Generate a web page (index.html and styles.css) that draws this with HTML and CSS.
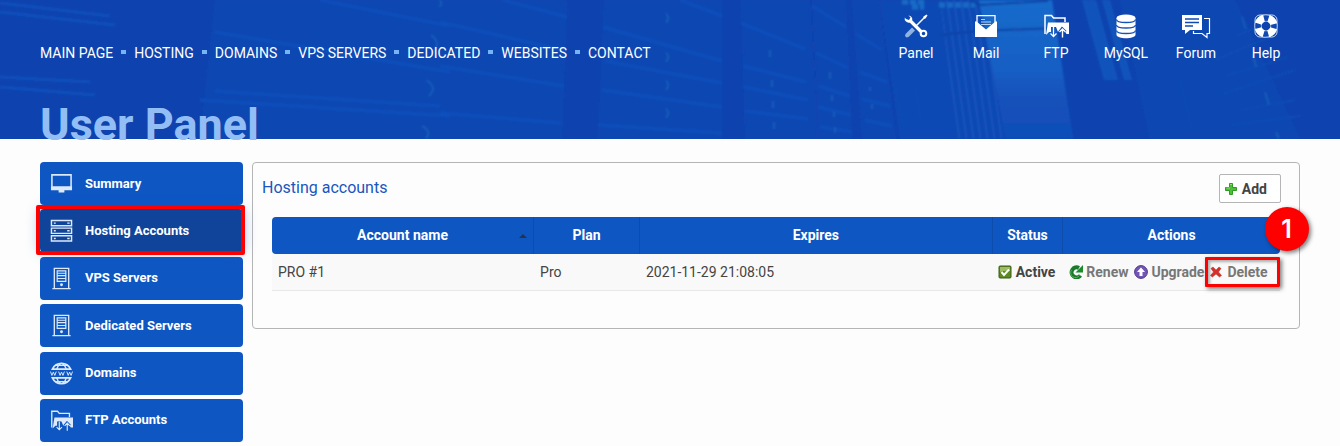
FILE: index.html
```html
<!DOCTYPE html>
<html lang="en">
<head>
    <meta charset="UTF-8">
    <title>User Panel - Hosting accounts</title>
    <link rel="stylesheet" href="styles.css">
</head>
<body>
    <!-- Shared icons -->
    <svg class="sprite" aria-hidden="true">
        <symbol id="icon-ftp" viewBox="0 0 26 24">
            <path d="M2 20V1.500h6.500l2 2.500H22v4" fill="none" stroke="currentColor" stroke-width="1.500"/>
            <path d="M5 8.500H26V20h-2.500L19 12.500l-4 5.500-2-5H8v5H6l-3 3z" fill="currentColor"/>
            <path d="M10.500 13v9M7.500 19.500l3 3 3-3M19.500 23.500v-8M16.500 18l3-3 3 3" fill="none" stroke="#0e55c0" stroke-width="3"/>
            <path d="M10.500 13v9M7.500 19.500l3 3 3-3M19.500 23.500v-8M16.500 18l3-3 3 3" fill="none" stroke="currentColor" stroke-width="1.300"/>
        </symbol>
        <symbol id="icon-server" viewBox="0 0 24 24">
            <path d="M4.500 22V1.500h15V22M2.500 22.500h19" fill="none" stroke="currentColor" stroke-width="1.400"/>
            <path d="M7.500 4h9v11h-9zM7.500 6.500h9M7.500 9h9M7.500 12h9" fill="none" stroke="currentColor" stroke-width="1.200"/>
            <circle cx="12" cy="18.500" r="1.500" fill="currentColor"/>
        </symbol>
    </svg>

    <header class="header">
        <svg class="header-art" viewBox="0 0 1340 139" preserveAspectRatio="xMidYMid slice" aria-hidden="true">
            <defs>
                <linearGradient id="glass" x1="0" y1="0" x2="0" y2="1">
                    <stop offset="0" stop-color="#176bcb"/>
                    <stop offset="0.500" stop-color="#145fc4"/>
                    <stop offset="0.700" stop-color="#1351ba"/>
                    <stop offset="1" stop-color="#1150b9"/>
                </linearGradient>
                <pattern id="slats" width="7" height="8" patternUnits="userSpaceOnUse" patternTransform="skewX(8)">
                    <path d="M2 0v8" stroke="#1659bf" stroke-width="2"/>
                </pattern>
                <filter id="soft"><feGaussianBlur stdDeviation="0.800"/></filter>
            </defs>
            <rect width="1340" height="139" fill="#0e43af"/>
            <g filter="url(#soft)">
                <!-- rack faces -->
                <path d="M215 0H567L562 139H200zM604 0H722V139H598zM741 0H810L818 139H745zM812 0H846L852 139H819zM852 0H879L896 139H862z" fill="#1047b2"/>
                <path d="M880 0H1000L1070 139H900z" fill="#1049b4"/>
                <path d="M940 0H979L1006 139H957z" fill="url(#slats)" opacity="0.600"/>
                <path d="M979 0H1052L1073 139H1006z" fill="url(#glass)"/>
                <path d="M1082 0h14l22 80h-14zM1102 0h8l22 80h-8z" fill="#155bc0" opacity="0.700"/>
                <path d="M1120 0H1235L1300 139H1150z" fill="#1147b2"/>
                <!-- shelf edges -->
                <g fill="none" stroke="#1150bc" stroke-width="3">
                    <path d="M0 3L110 16M0 12L115 25M0 77L90 82M0 87L95 95"/>
                    <path d="M320 0L450 26M215 32L450 72M200 100L450 116M215 91L440 106"/>
                    <path d="M503 0L567 17M440 22L566 51M440 66L564 86M440 113L561 123"/>
                    <path d="M603 27L722 61M605 61L722 83M602 90L722 107M598 125L722 133M680 0L722 16"/>
                    <path d="M741 23L805 49M743 66L806 82M744 87L808 100M745 111L808 119M812 6L846 27M816 53L848 68M818 86L850 96M818 107L851 115M820 127L852 132"/>
                    <path d="M856 34L882 50M860 72L887 82M862 99L890 106M865 120L892 126"/>
                </g>
                <!-- side rack handles -->
                <g fill="none" stroke="#155cb9" stroke-width="2">
                    <path d="M439 0q5 3 0 7M431 35q11 7 1 19M426 80q12 7 3 16M422 126q10 5 4 13"/>
                    <path d="M666 13q4 5 0 10M666 52q4 5 0 10M666 80q4 5 0 10M666 108q4 5 0 10M770 50v7M772 80v7M773 101v7M774 122v7M830 72v7M832 95v6M834 112v5M835 127v6M870 87v4M872 104v5M1242 17l4 12M1253 55l3 12M1265 92l4 13M1276 132l3 7"/>
                </g>
                <!-- ceiling lamps -->
                <path d="M902 2h24M912 7h12M939 5h36" fill="none" stroke="#176cc6" stroke-width="5" stroke-dasharray="6 2"/>
                <path d="M970 0L980 5 1048 1M940 35L978 31 1057 28" fill="none" stroke="#1043a5" stroke-width="2"/>
                <!-- cable bundles -->
                <g stroke="#1453b9" stroke-width="1">
                    <path d="M1222 94L1295 70M1226 76L1288 57M1215 60L1272 36M1240 110L1295 100M1232 125L1300 116M1236 36L1258 27"/>
                    <path d="M895 85l8 40M915 83l6 40M1180 80l12 50" opacity="0.600"/>
                </g>
            </g>
        </svg>

        <div class="header-bar">
            <nav class="main-nav">
                <a href="#">MAIN PAGE</a>
                <a href="#">HOSTING</a>
                <a href="#">DOMAINS</a>
                <a href="#">VPS SERVERS</a>
                <a href="#">DEDICATED</a>
                <a href="#">WEBSITES</a>
                <a href="#">CONTACT</a>
            </nav>
            <nav class="quick-nav">
                <a href="#">
                    <svg viewBox="0 0 26 26">
                        <path d="M9 14.500L2.500 21l-.500 2 1.500 1.500 2-.500L12 17.500z" fill="#8fb2e2"/>
                        <path d="M12 14l9-9" stroke="#fff" stroke-width="1.400"/>
                        <path d="M20 5.500l.500-2 3-2 1 1-2 3-2 .500z" fill="#fff"/>
                        <path d="M7 7.500L19 19.500" stroke="#fff" stroke-width="3.200"/>
                        <path d="M5.500 2.500l2 2L6 7 3 6 1.800 4.500a4.200 4.200 0 0 0 4.600 5.200l2.800-2.300A4 4 0 0 0 5.500 2.500z" fill="#fff"/>
                        <circle cx="20.500" cy="20.500" r="2.800" fill="none" stroke="#fff" stroke-width="2"/>
                    </svg>
                    Panel
                </a>
                <a href="#">
                    <svg viewBox="0 0 26 26">
                        <path d="M4 11V2.700h18V11" fill="none" stroke="#fff" stroke-width="1.300"/>
                        <path d="M8 6.500h4M8 9h10M8 11.500h10" stroke="#b9d4f3" stroke-width="1.200"/>
                        <path d="M2 9l1-1 10 8.500L23 8l1 1v15H2z" fill="#fff"/>
                    </svg>
                    Mail
                </a>
                <a href="#">
                    <svg viewBox="0 0 26 24"><use href="#icon-ftp"/></svg>
                    FTP
                </a>
                <a href="#">
                    <svg viewBox="0 0 26 26">
                        <path d="M3.500 5v16.500c0 5 19 5 19 0V5z" fill="#fff"/>
                        <ellipse cx="13" cy="5" rx="9.500" ry="3.400" fill="#fff"/>
                        <path d="M3.500 6.500c0 4 19 4 19 0M3.500 12c0 4 19 4 19 0M3.500 17.500c0 4 19 4 19 0" fill="none" stroke="#1453b9" stroke-width="1.300"/>
                    </svg>
                    MySQL
                </a>
                <a href="#">
                    <svg class="icon-wide" viewBox="0 0 30 26">
                        <path d="M23 5.500h5.500v15H26v4l-5-4h-8.500V18" fill="none" stroke="#fff" stroke-width="1.200"/>
                        <path d="M1 2h20v15H9l-5 4v-4H1z" fill="#fff"/>
                        <path d="M4 6h14M4 9.500h14M4 13h8" stroke="#1048b2" stroke-width="1.400"/>
                    </svg>
                    Forum
                </a>
                <a href="#">
                    <svg viewBox="0 0 26 26">
                        <rect x="2" y="2" width="22" height="22" rx="5" fill="none" stroke="#c3d6f1" stroke-width="1"/>
                        <circle cx="13" cy="13" r="8" fill="none" stroke="#c3d6f1" stroke-width="7"/>
                        <circle cx="13" cy="13" r="8" fill="none" stroke="#1048b2" stroke-width="5.600"/>
                        <circle cx="13" cy="13" r="8" fill="none" stroke="#fff" stroke-width="7" stroke-dasharray="8 4.566" transform="rotate(16.400 13 13)"/>
                    </svg>
                    Help
                </a>
            </nav>
        </div>
        <h1>User Panel</h1>
    </header>

    <main class="content">
        <nav class="sidebar">
            <a href="#">
                <svg viewBox="0 0 24 24">
                    <path d="M2 3h20v13H2z" fill="none" stroke="currentColor" stroke-width="1.600"/>
                    <path d="M1 15h22v4H1zM9 19h6v2.500H9z" fill="currentColor"/>
                </svg>
                Summary
            </a>
            <a href="#" class="selected">
                <svg viewBox="0 0 24 24">
                    <path d="M1.500 1.500h21v5.500h-21zM1.500 9.500h21V15h-21zM1.500 17.500h21V23h-21z" fill="none" stroke="currentColor" stroke-width="1.500"/>
                    <path d="M4 4.300h2M4 12.300h2M4 20.300h2M18 4.300h2.500M18 12.300h2.500M18 20.300h2.500" stroke="currentColor" stroke-width="1.500"/>
                </svg>
                Hosting Accounts
            </a>
            <a href="#">
                <svg viewBox="0 0 24 24"><use href="#icon-server"/></svg>
                VPS Servers
            </a>
            <a href="#">
                <svg viewBox="0 0 24 24"><use href="#icon-server"/></svg>
                Dedicated Servers
            </a>
            <a href="#">
                <svg viewBox="0 0 24 24">
                    <path d="M2.500 7.500a10.500 10.500 0 0 1 19 0zM2.500 16.500a10.500 10.500 0 0 0 19 0z" fill="none" stroke="currentColor" stroke-width="1.800"/>
                    <path d="M7 7.500q1-4 4-6M17 7.500q-1-4-4-6M7 16.500q1 4 4 6M17 16.500q-1 4-4 6M6 3.500h12M6 20.500h12" fill="none" stroke="currentColor" stroke-width="1.500"/>
                    <path d="M.500 10l1.500 4 1.500-3.500L5 14l1.500-4M9 10l1.500 4 1.500-3.500 1.500 3.500 1.500-4M17.500 10l1.500 4 1.500-3.500 1.500 3.500 1.500-4" fill="none" stroke="currentColor" stroke-width="1"/>
                </svg>
                Domains
            </a>
            <a href="#">
                <svg viewBox="0 0 26 24"><use href="#icon-ftp"/></svg>
                FTP Accounts
            </a>
        </nav>

        <section class="panel">
            <div class="panel-head">
                <h2>Hosting accounts</h2>
                <button type="button" class="add-button">
                    <svg viewBox="0 0 14 14">
                        <path d="M5.500 1.500h3v4h4v3h-4v4h-3v-4h-4v-3h4z" fill="#4fbd3a" stroke="#2f9a22" stroke-width="1" stroke-linejoin="round"/>
                        <path d="M6 2.500h2M2.500 6H6" stroke="#8fe07a" stroke-width="1"/>
                    </svg>
                    Add
                </button>
            </div>

            <table class="accounts">
                <colgroup>
                    <col class="col-name">
                    <col class="col-plan">
                    <col class="col-expires">
                    <col class="col-status">
                    <col class="col-actions">
                </colgroup>
                <thead>
                    <tr>
                        <th class="sorted">Account name</th>
                        <th>Plan</th>
                        <th>Expires</th>
                        <th>Status</th>
                        <th>Actions</th>
                    </tr>
                </thead>
                <tbody>
                    <tr>
                        <td>PRO #1</td>
                        <td>Pro</td>
                        <td>2021-11-29 21:08:05</td>
                        <td>
                            <span class="status">
                                <svg viewBox="0 0 14 14">
                                    <rect x="1" y="1" width="12" height="12" rx="1" fill="#5d8a22" stroke="#3c5c16"/>
                                    <path d="M2 2h10v4q-5-1-10 1z" fill="#9cbb62"/>
                                    <path d="M3.500 7l2.500 3L11 4.500" fill="none" stroke="#fff" stroke-width="2"/>
                                </svg>
                                Active
                            </span>
                        </td>
                        <td>
                            <div class="actions">
                                <a href="#">
                                    <svg viewBox="0 0 14 14">
                                        <path d="M11.500 10.500A5 5 0 1 1 10 3" fill="none" stroke="#1c7a2c" stroke-width="4"/>
                                        <path d="M14 0v7.500H6.500z" fill="#1a8a2e"/>
                                        <path d="M10.500 10.500A4.500 4.500 0 0 1 2.500 5" fill="none" stroke="#4fb45a" stroke-width="1"/>
                                    </svg>
                                    Renew
                                </a>
                                <a href="#">
                                    <svg viewBox="0 0 14 14">
                                        <circle cx="7" cy="7" r="6.400" fill="#7355b3" stroke="#50378f"/>
                                        <path d="M7 2.500L3 7h2.500v4h3V7H11z" fill="#fff"/>
                                    </svg>
                                    Upgrade
                                </a>
                                <a href="#" class="delete">
                                    <svg viewBox="0 0 14 14">
                                        <path d="M1 3.500L3 2l3 3 3-3 2 1.500L8.500 7l3 3.500L9.500 12 6 9l-3.500 3-2-1.500L3.500 7z" fill="#d5312c" stroke="#b82a27" stroke-width="0.500" stroke-linejoin="round"/>
                                    </svg>
                                    Delete
                                    <span class="step">1</span>
                                </a>
                            </div>
                        </td>
                    </tr>
                </tbody>
            </table>
        </section>
    </main>
</body>
</html>
```
FILE: styles.css
```css
body {
    margin: 0;
    font-family: Roboto, "Liberation Sans", sans-serif;
    font-size: 14px;
    line-height: 20px;
    color: #444;
    background-color: #fdfdfd;
}

a {
    color: inherit;
    text-decoration: none;
}

svg {
    flex: none;
}

.sprite {
    display: none;
}

/* Header */
.header {
    position: relative;
    padding: 13px 39px 0 40px;
    color: white;
    background-color: #0e43af;
}

.header-art {
    position: absolute;
    top: 0;
    left: 0;
    width: 100%;
    height: 100%;
}

.header-bar {
    position: relative;
    display: flex;
    justify-content: space-between;
    align-items: flex-end;
}

.main-nav {
    display: flex;
}

.main-nav a + a::before {
    content: "";
    display: inline-block;
    width: 5px;
    height: 4px;
    margin: 0 8px;
    vertical-align: 4px;
    background-color: #76b5f5;
}

.quick-nav {
    display: flex;
}

.quick-nav a {
    display: flex;
    flex-direction: column;
    align-items: center;
    gap: 4px;
    width: 70px;
}

.quick-nav svg {
    width: 26px;
    height: 26px;
}

.quick-nav .icon-wide {
    width: 30px;
}

/* The title stands on the lower edge of the header */
.header h1 {
    position: relative;
    margin: 39px 0 0;
    font-size: 45px;
    line-height: 45px;
    height: 37px;
    color: #92bdf5;
}

/* Page body */
.content {
    display: flex;
    align-items: flex-start;
    gap: 9px;
    padding: 23px 40px 0;
}

.sidebar {
    display: flex;
    flex-direction: column;
    justify-content: space-between;
    flex: none;
    width: 203px;
    min-height: 280px;
}

.sidebar a {
    position: relative;
    display: flex;
    align-items: center;
    gap: 12px;
    height: 43px;
    padding: 0 10px;
    box-sizing: border-box;
    border-radius: 4px;
    font-size: 13px;
    font-weight: bold;
    color: white;
    background-color: #0e56c2;
}

.sidebar svg {
    width: 23px;
    height: 23px;
    color: #dce9fa;
}

.sidebar .selected {
    background-color: #10449a;
    box-shadow: 0 0 14px rgba(14, 86, 194, 0.4);
}

.sidebar .selected::after {
    content: "";
    position: absolute;
    inset: -4px -2px -3px -4px;
    border: 4px solid #fe0000;
    border-radius: 2px;
}

.panel {
    flex: 1;
    padding: 11px 19px 37px 9px;
    border: 1px solid #b5b5b5;
    border-radius: 4px;
}

.panel-head {
    display: flex;
    justify-content: space-between;
    align-items: flex-start;
    margin-right: -1px;
}

.panel-head h2 {
    margin: 4px 0 0;
    font-size: 16px;
    font-weight: normal;
    color: #1a56bd;
}

.add-button {
    display: flex;
    align-items: center;
    gap: 4px;
    height: 29px;
    padding: 0 13px 0 4px;
    border: 1px solid #b5b5b5;
    border-radius: 2px;
    font: inherit;
    font-weight: bold;
    color: #444;
    background-color: white;
}

.add-button svg,
.status svg,
.actions svg {
    width: 14px;
    height: 14px;
}

/* Accounts table */
.accounts {
    width: calc(100% - 10px);
    margin: 14px 0 0 10px;
    table-layout: fixed;
    border-collapse: separate;
    border-spacing: 0;
}

.col-name {
    width: 26%;
}

.col-plan {
    width: 10.5%;
}

.col-expires {
    width: 35%;
}

.col-status {
    width: 7%;
}

.accounts th {
    position: relative;
    height: 37px;
    padding: 0 0 2px;
    box-sizing: border-box;
    color: white;
    background-color: #0e56c2;
    border-right: 1px solid #0d4cab;
}

.accounts th:first-child {
    border-radius: 4px 0 0 4px;
}

.accounts th:last-child {
    border-right: 0;
    border-radius: 0 4px 4px 0;
}

/* Ascending sort arrow */
.sorted::after {
    content: "";
    position: absolute;
    right: 6px;
    top: 17px;
    border: 4px solid transparent;
    border-top: 0;
    border-bottom-color: #24324a;
}

.accounts td {
    height: 37px;
    padding: 0 6px;
    box-sizing: border-box;
    white-space: nowrap;
    background-color: #f9f9f9;
    border-bottom: 1px solid #e8e8e8;
}

.status,
.actions,
.actions a {
    display: flex;
    align-items: center;
}

.status {
    gap: 4px;
    margin-left: -1px;
    font-weight: bold;
}

.actions {
    gap: 6px;
}

.actions a {
    position: relative;
    gap: 3px;
    font-weight: bold;
    color: #777;
}

/* Highlighted action with its step number */
.delete::after {
    content: "";
    position: absolute;
    inset: -5px -12px -5px -5px;
    border: 3px solid #fe0000;
    border-radius: 1px;
    box-shadow: 2px 2px 4px rgba(0, 0, 0, 0.5), inset 2px 2px 3px rgba(0, 0, 0, 0.3);
}

.step {
    position: absolute;
    right: -41px;
    bottom: 31px;
    width: 44px;
    border-radius: 50%;
    font-family: Inter, sans-serif;
    font-size: 25px;
    font-weight: 600;
    line-height: 44px;
    text-align: center;
    color: white;
    background-color: #fe0000;
    box-shadow: 2px 2px 4px rgba(0, 0, 0, 0.5);
}
```
